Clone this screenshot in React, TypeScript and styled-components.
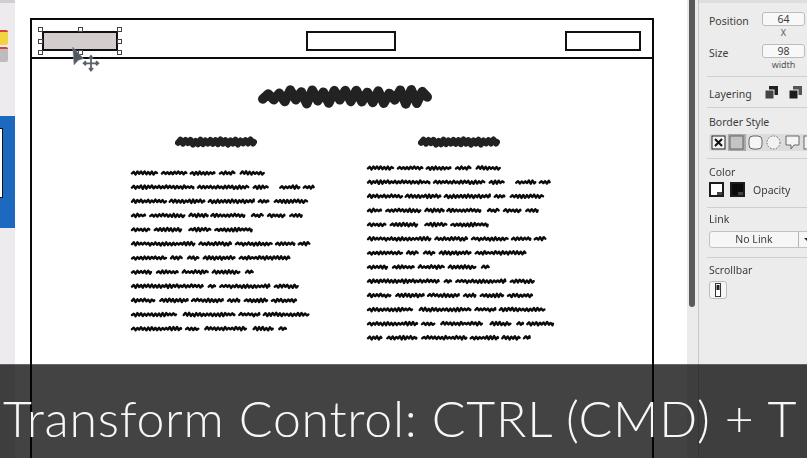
import styled, { createGlobalStyle } from "styled-components";

const GlobalStyle = createGlobalStyle`
  html, body {
    margin: 0;
    padding: 0;
    background: #fff;
  }
`;

const Page = styled.div`
  position: relative;
  display: flex;
  width: 807px;
  height: 458px;
  overflow: hidden;
  font-family: "Noto Sans", "Liberation Sans", sans-serif;
`;

/* left sidebar */
const Sidebar = styled.div`
  width: 15px;
  flex-shrink: 0;
  display: flex;
  flex-direction: column;
  background: #eeebee;
`;

const TopStrip = styled.div`
  height: 3px;
  background: #cfcfcf;
`;

const Sticky = styled.div<{ $color: string; $gap: number }>`
  width: 8px;
  height: 15px;
  margin-top: ${(p) => p.$gap}px;
  background: ${(p) => p.$color};
  border-top: 2px solid #d9423a;
  border-radius: 0 2px 2px 0;
  box-sizing: border-box;
`;

const BlueBand = styled.div`
  height: 112px;
  margin-top: 54px;
  padding-top: 12px;
  box-sizing: border-box;
  background: #1c69bf;
`;

const Thumb = styled.div`
  width: 2px;
  height: 68px;
  background: #fff;
  border: 1px solid #111;
  border-left: 0;
`;

/* wireframe canvas */
const Canvas = styled.div`
  width: 672px;
  flex-shrink: 0;
  padding: 18px 0 0 15px;
  box-sizing: border-box;
  background: #fff;
`;

const Frame = styled.div`
  width: 624px;
  height: 470px;
  box-sizing: border-box;
  border: 2px solid #0a0a0a;
`;

const FrameHeader = styled.div`
  position: relative;
  display: grid;
  grid-template-columns: 264px 259px auto;
  align-items: start;
  height: 39px;
  box-sizing: border-box;
  padding: 11px 0 0 10px;
  border-bottom: 2px solid #0a0a0a;
`;

const Box = styled.div<{ $width: number; $selected?: boolean }>`
  position: relative;
  width: ${(p) => p.$width}px;
  height: 20px;
  box-sizing: border-box;
  border: 2px solid #111;
  background: ${(p) => (p.$selected ? "#d4cdcd" : "#fff")};
`;

/* handles sit just outside the selected box, so the offset grows towards each edge */
const Handle = styled.span<{ $x: number; $y: number }>`
  position: absolute;
  left: calc(${(p) => p.$x}% + ${(p) => (p.$x - 50) * 0.07}px);
  top: calc(${(p) => p.$y}% + ${(p) => (p.$y - 50) * 0.07}px);
  width: 5px;
  height: 5px;
  margin: -2.5px 0 0 -2.5px;
  background: #fff;
  border: 1px solid #444;
  box-sizing: border-box;
`;

const CursorIcon = styled.svg`
  position: absolute;
  left: 39px;
  top: 26px;
  filter: blur(0.4px);
`;

const FrameBody = styled.div`
  padding: 26px 0 0 99px;
`;

const MainHeading = styled.div`
  height: 24px;
  margin-left: 127px;
`;

const Columns = styled.div`
  display: grid;
  grid-template-columns: 236px 1fr;
  margin-top: 26px;
`;

const Column = styled.div<{ $indent: number; $gap: number }>`
  display: flex;
  flex-direction: column;

  .sub {
    margin-left: ${(p) => p.$indent}px;
    margin-bottom: ${(p) => p.$gap}px;
  }
`;

const Ink = styled.svg`
  display: block;
  overflow: visible;
  filter: blur(0.35px);
`;

/* scrollbar gutter */
const Gutter = styled.div`
  width: 11px;
  flex-shrink: 0;
  background: #ebebeb;
`;

const GutterThumb = styled.div`
  width: 6px;
  height: 307px;
  margin-left: 2px;
  background: #5a5a5a;
  border-radius: 0 0 3px 3px;
`;

/* properties panel */
const Panel = styled.div`
  flex: 1;
  min-width: 0;
  background: #ececec;
  border-left: 1px solid #c6c6c6;
  color: #3c3c3c;
  font-size: 10.5px;
  line-height: 13px;
  filter: blur(0.25px);
`;

const PanelTop = styled.div`
  height: 3px;
  background: #dedede;
`;

const Section = styled.div<{ $top: number; $bottom: number; $last?: boolean }>`
  margin-left: 8px;
  padding: ${(p) => p.$top}px 0 ${(p) => p.$bottom}px 2px;
  border-bottom: ${(p) => (p.$last ? "0" : "1px solid #cfcfcf")};
`;

const FieldRow = styled.div`
  display: grid;
  grid-template-columns: 53px 43px;
  align-items: start;
  margin-bottom: 7px;

  &:last-child {
    margin-bottom: 0;
  }
`;

const FieldLabel = styled.div`
  line-height: 16px;
  height: 14px;
  margin-top: 1px;
`;

const NumberBox = styled.div`
  height: 14px;
  box-sizing: border-box;
  border: 1px solid #bcbcbc;
  border-radius: 3px;
  background: #f8f8f8;
  text-align: center;
  line-height: 12px;
`;

const FieldHint = styled.div`
  height: 11px;
  font-size: 9px;
  line-height: 13px;
  text-align: center;
  color: #555;
`;

const LayeringRow = styled.div`
  display: flex;
  align-items: center;
  height: 30px;
  padding-top: 4px;
  box-sizing: border-box;
  justify-content: space-between;
`;

const LayerIcons = styled.div`
  display: flex;
  gap: 9px;
  margin-top: -3px;
  padding-right: 4px;
`;

const StyleRow = styled.div`
  display: flex;
  height: 17px;
  width: 110px;
  margin-top: 5px;
  background: #dcdcdc;
  border-radius: 2px;
`;

const StyleCell = styled.div<{ $active?: boolean }>`
  width: 18.5px;
  height: 17px;
  flex-shrink: 0;
  display: flex;
  align-items: center;
  justify-content: center;
  background: ${(p) => (p.$active ? "#a9a9a9" : "transparent")};
`;

const ColorRow = styled.div`
  display: flex;
  align-items: center;
  margin-top: 3px;
  gap: 6px;
`;

const Swatch = styled.div<{ $fill: string }>`
  position: relative;
  width: 15px;
  height: 15px;
  box-sizing: border-box;
  background: ${(p) => p.$fill};
  border: 2px solid #1c1c1c;

  &::after {
    content: "";
    position: absolute;
    right: 0;
    bottom: 0;
    width: 5px;
    height: 3px;
    background: #444;
  }
`;

const OpacityLabel = styled.div`
  margin-left: 2px;
  padding-top: 2px;
`;

const LinkButton = styled.div`
  display: flex;
  width: 120px;
  height: 17px;
  margin-top: 5px;
  box-sizing: border-box;
  border: 1px solid #c2c2c2;
  border-radius: 3px;
  background: #f6f6f6;
  line-height: 15px;
`;

const LinkText = styled.div`
  width: 88px;
  text-align: center;
  border-right: 1px solid #b5b5b5;
`;

const LinkArrow = styled.div`
  width: 0;
  height: 0;
  margin: 6px 0 0 5px;
  border-left: 4px solid transparent;
  border-right: 4px solid transparent;
  border-top: 4px solid #222;
`;

const ScrollToggle = styled.div`
  display: flex;
  align-items: center;
  justify-content: center;
  width: 18px;
  height: 18px;
  margin-top: 4px;
  box-sizing: border-box;
  border: 1px solid #bdbdbd;
  border-radius: 3px;
  background: #f6f6f6;
`;

/* caption overlay */
const Caption = styled.div`
  position: absolute;
  left: 0;
  right: 0;
  top: 364px;
  height: 94px;

  &::before {
    content: "";
    position: absolute;
    inset: 0;
    background: #434343;
    mix-blend-mode: multiply;
    border-top: 1px solid #6a6a6a;
  }
`;

const CaptionText = styled.div`
  position: relative;
  padding: 24px 0 0 3px;
  font-family: Lato, "Open Sans", sans-serif;
  font-weight: 300;
  font-size: 50px;
  letter-spacing: 0.74px;
  line-height: 60px;
  color: #f7f7f7;
  white-space: nowrap;
`;

/* builds the marker-style zigzag used for the redacted wireframe text */
const zigzag = (x0: number, x1: number, cy: number, amp: number, step: number, seed: number) => {
  let d = `M${x0} ${cy + amp * 0.4}`;
  let up = true;
  let n = seed * 7 + 3;
  for (let x = x0 + step / 2; x < x1; x += step / 2) {
    n = (n * 31 + 17) % 101;
    const jitter = (n / 101 - 0.5) * amp * 0.9;
    d += `L${x.toFixed(1)} ${(cy + (up ? -amp : amp) + jitter).toFixed(1)}`;
    up = !up;
  }
  return d + `L${x1} ${cy}`;
};

const Scribble = ({
  width,
  height,
  amp,
  step,
  stroke,
  color = "#222",
}: {
  width: number;
  height: number;
  amp: number;
  step: number;
  stroke: number;
  color?: string;
}) => (
  <Ink className="sub" width={width} height={height}>
    <path
      d={zigzag(stroke / 2, width - stroke / 2, height / 2, amp, step, width)}
      fill="none"
      stroke={color}
      strokeWidth={stroke}
      strokeLinecap="round"
      strokeLinejoin="round"
    />
  </Ink>
);

// word spans per line, in 3x zoom units measured from the column start
const LINES: number[][][] = [
  [[0, 78], [90, 166], [176, 250], [264, 310], [326, 398]],
  [[0, 187], [198, 352], [365, 410], [445, 505], [515, 548]],
  [[0, 105], [113, 220], [230, 368], [380, 412], [428, 528]],
  [[0, 42], [55, 160], [172, 230], [238, 340], [360, 395], [408, 460], [475, 512]],
  [[0, 55], [68, 150], [172, 238], [250, 362]],
  [[0, 190], [202, 300], [312, 422], [432, 490], [500, 535]],
  [[0, 105], [117, 152], [168, 202], [215, 310], [323, 475]],
  [[0, 60], [75, 140], [152, 230], [242, 325], [342, 365]],
  [[0, 215], [230, 252], [265, 415], [428, 500]],
  [[0, 70], [85, 170], [180, 275], [288, 325], [338, 408], [420, 495]],
  [[0, 135], [155, 310], [322, 385], [395, 532]],
  [[0, 150], [162, 202], [220, 345], [365, 425], [442, 465]],
];

const RIGHT_LINES: number[][][] = [
  ...LINES.slice(0, 11),
  [[0, 150], [162, 202], [220, 345], [368, 430], [448, 468], [478, 558]],
  [[0, 43], [58, 148], [163, 298], [308, 393], [403, 458], [468, 488]],
];

const TextBlock = ({ lines, seed }: { lines: number[][][]; seed: number }) => (
  <Ink width={200} height={lines.length * 14.15}>
    {lines.map((words, i) =>
      words.map(([a, b], j) => (
        <path
          key={`${i}-${j}`}
          d={zigzag(1, Math.max(2, (b - a) / 3), 0, 1.2, 3.6, seed + i * 5 + j)}
          transform={`translate(${(a / 3).toFixed(1)} ${(i * 14.15 + 7).toFixed(2)})`}
          fill="none"
          stroke="#0c0c0c"
          strokeWidth={2.4}
          strokeLinecap="round"
          strokeLinejoin="round"
        />
      )),
    )}
  </Ink>
);

const HANDLES = [
  [0, 0],
  [50, 0],
  [100, 0],
  [0, 50],
  [100, 50],
  [0, 100],
  [50, 100],
  [100, 100],
];

const LayerIcon = ({ front }: { front: boolean }) => (
  <svg width="15" height="15" viewBox="0 0 15 15">
    <rect x="5" y="1" width="9" height="9" fill={front ? "#555" : "#222"} />
    <rect x="1" y="5" width="9" height="9" fill={front ? "#1c1c1c" : "#444"} stroke="#ececec" strokeWidth="1" />
  </svg>
);

const App = () => {
  return (
    <Page>
      <GlobalStyle />
      <Sidebar>
        <TopStrip />
        <Sticky $color="#f3d33f" $gap={27} />
        <Sticky $color="#bdbdbd" $gap={2} />
        <BlueBand>
          <Thumb />
        </BlueBand>
      </Sidebar>

      <Canvas>
        <Frame>
          <FrameHeader>
            <Box $width={76} $selected>
              {HANDLES.map(([x, y]) => (
                <Handle key={`${x}-${y}`} $x={x} $y={y} />
              ))}
            </Box>
            <Box $width={90} />
            <Box $width={76} />
            <CursorIcon width="30" height="26" viewBox="0 0 30 26">
              <path d="M1.7 1 L3 19 L7 14.5 L12.5 12.5 Z" fill="#4f5861" stroke="#8d949a" strokeWidth="0.6" />
              <path
                d="M13 17.3 H27 M20 10.3 V24.3 M18 12.5 L20 10 L22 12.5 M18 22 L20 24.5 L22 22 M15 15.3 L12.7 17.3 L15 19.3 M25 15.3 L27.3 17.3 L25 19.3"
                fill="none"
                stroke="#59616a"
                strokeWidth="1.8"
              />
            </CursorIcon>
          </FrameHeader>
          <FrameBody>
            <MainHeading>
              <Scribble width={174} height={24} amp={5} step={11} stroke={9.5} />
            </MainHeading>
            <Columns>
              <Column $indent={44} $gap={16.5}>
                <Scribble width={82} height={14} amp={1.8} step={5} stroke={6} />
                <TextBlock lines={LINES} seed={3} />
              </Column>
              <Column $indent={51} $gap={12}>
                <Scribble width={82} height={14} amp={1.8} step={5} stroke={6} />
                <TextBlock lines={RIGHT_LINES} seed={3} />
              </Column>
            </Columns>
          </FrameBody>
        </Frame>
      </Canvas>

      <Gutter>
        <GutterThumb />
      </Gutter>

      <Panel>
        <PanelTop />
        <Section $top={9} $bottom={7}>
          <FieldRow>
            <FieldLabel>Position</FieldLabel>
            <div>
              <NumberBox>64</NumberBox>
              <FieldHint>X</FieldHint>
            </div>
          </FieldRow>
          <FieldRow>
            <FieldLabel>Size</FieldLabel>
            <div>
              <NumberBox>98</NumberBox>
              <FieldHint>width</FieldHint>
            </div>
          </FieldRow>
        </Section>
        <Section $top={0} $bottom={0}>
          <LayeringRow>
            <span>Layering</span>
            <LayerIcons>
              <LayerIcon front={false} />
              <LayerIcon front />
            </LayerIcons>
          </LayeringRow>
        </Section>
        <Section $top={8} $bottom={7}>
          <div>Border Style</div>
          <StyleRow>
            <StyleCell>
              <svg width="15" height="15" viewBox="0 0 15 15">
                <rect x="1" y="1" width="13" height="13" fill="#f4f4f4" stroke="#222" />
                <path d="M4 4 L11 11 M11 4 L4 11" stroke="#111" strokeWidth="2" />
              </svg>
            </StyleCell>
            <StyleCell $active>
              <svg width="15" height="15" viewBox="0 0 15 15">
                <rect x="1" y="1" width="13" height="13" fill="#c7c3c5" stroke="#666" />
              </svg>
            </StyleCell>
            <StyleCell>
              <svg width="15" height="15" viewBox="0 0 15 15">
                <rect x="1" y="1" width="13" height="13" rx="4" fill="#f6f6f6" stroke="#666" />
              </svg>
            </StyleCell>
            <StyleCell>
              <svg width="15" height="15" viewBox="0 0 15 15">
                <circle cx="7.5" cy="7.5" r="6.5" fill="#f2f2f2" stroke="#666" strokeDasharray="1.5 1.5" />
              </svg>
            </StyleCell>
            <StyleCell>
              <svg width="15" height="15" viewBox="0 0 15 15">
                <path d="M1 1 H14 V10 H9 L6 14 V10 H1 Z" fill="#f4f4f4" stroke="#666" />
              </svg>
            </StyleCell>
            <StyleCell>
              <svg width="15" height="15" viewBox="0 0 15 15">
                <rect x="1" y="1" width="13" height="13" fill="#f4f4f4" stroke="#666" />
              </svg>
            </StyleCell>
          </StyleRow>
        </Section>
        <Section $top={7} $bottom={10}>
          <div>Color</div>
          <ColorRow>
            <Swatch $fill="#fff" />
            <Swatch $fill="#0b0b0b" />
            <OpacityLabel>Opacity</OpacityLabel>
          </ColorRow>
        </Section>
        <Section $top={5} $bottom={9}>
          <div>Link</div>
          <LinkButton>
            <LinkText>No Link</LinkText>
            <LinkArrow />
          </LinkButton>
        </Section>
        <Section $top={6} $bottom={0} $last>
          <div>Scrollbar</div>
          <ScrollToggle>
            <svg width="8" height="14" viewBox="0 0 8 14">
              <rect x="1.5" y="0.5" width="5" height="13" fill="#fff" stroke="#333" />
              <rect x="2.5" y="2" width="3" height="5" fill="#222" />
            </svg>
          </ScrollToggle>
        </Section>
      </Panel>

      <Caption>
        <CaptionText>Transform Control: CTRL (CMD) + T</CaptionText>
      </Caption>
    </Page>
  );
};

export default App;
